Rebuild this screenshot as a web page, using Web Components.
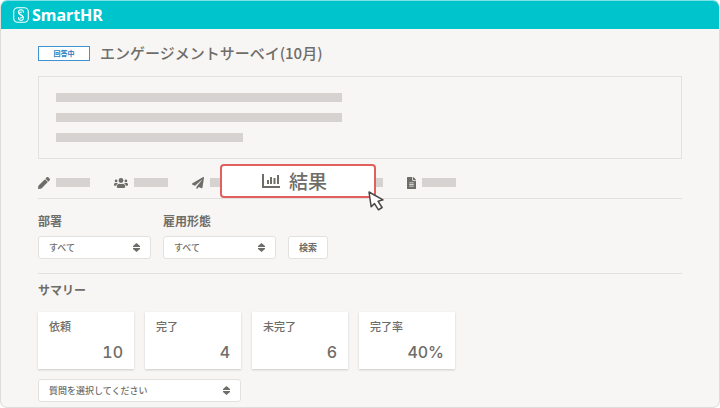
<!DOCTYPE html>
<html lang="ja">
<head>
<meta charset="utf-8">
<meta name="viewport" content="width=device-width, initial-scale=1">
<title>エンゲージメントサーベイ</title>
<style>
    * { box-sizing: border-box; }
    body {
        --text: #6f6d68;
        --line: #e2e1df;
        --bar: #d5d2d0;
        --brand: #00c4cc;
        margin: 0;
        background: #fff;
        color: var(--text);
        font-family: "Noto Sans CJK JP", sans-serif;
        font-weight: 500;
    }
    .title-row { display: flex; align-items: center; gap: 10px; height: 20px; }
    h1 { margin: 0; font-size: 15px; line-height: 20px; font-weight: 500; }
    h2 { margin: 7px 0 13px; font-size: 12px; line-height: 18px; font-weight: 700; }
    .filters {
        display: flex;
        align-items: flex-end;
        gap: 12px;
        margin-top: 13px;
        padding-bottom: 14px;
        border-bottom: 1px solid var(--line);
    }
    .filters select-box { width: 113px; }
    .cards { display: flex; flex-wrap: wrap; gap: 11px; margin-bottom: 10px; }
    .question { width: 203px; }
</style>
</head>
<body>
<app-window>
    <app-header slot="header">SmartHR</app-header>
    <div class="title-row">
        <status-badge>回答中</status-badge>
        <h1>エンゲージメントサーベイ(10月)</h1>
    </div>
    <text-panel></text-panel>
    <tab-bar>
        <tab-item icon="pencil" label="編集"></tab-item>
        <tab-item icon="users" label="対象者"></tab-item>
        <tab-item icon="plane" label="送信"></tab-item>
        <tab-item icon="chart" label="集計" wide>
            <tab-callout>結果</tab-callout>
        </tab-item>
        <tab-item icon="file" label="書類"></tab-item>
    </tab-bar>
    <div class="filters">
        <select-box label="部署" options="すべて"></select-box>
        <select-box label="雇用形態" options="すべて"></select-box>
        <search-button>検索</search-button>
    </div>
    <h2>サマリー</h2>
    <div class="cards">
        <summary-card value="10">依頼</summary-card>
        <summary-card value="4">完了</summary-card>
        <summary-card value="6">未完了</summary-card>
        <summary-card value="40%">完了率</summary-card>
    </div>
    <select-box class="question" options="質問を選択してください"></select-box>
</app-window>

<script>
const ICONS = {
    pencil: `<svg width="12" height="12" viewBox="0 0 512 512"><path d="M498 142l-46 46c-5 5-12 5-17 0L324 77c-5-5-5-12 0-17l46-46c19-19 49-19 68 0l60 60c19 19 19 49 0 68zM300 92L22 362 0 484c-3 16 12 30 28 28l122-22 270-278z"/></svg>`,
    users: `<svg width="14" height="12" viewBox="0 0 640 512"><path d="M96 224a64 64 0 1 0 0-128 64 64 0 0 0 0 128zm448 0a64 64 0 1 0 0-128 64 64 0 0 0 0 128zm32 32h-64c-18 0-34 7-45 18 40 22 69 62 75 110h66c18 0 32-14 32-32v-32c0-35-29-64-64-64zm-256 0a112 112 0 1 0 0-224 112 112 0 0 0 0 224zm77 32h-8c-43 21-94 21-138 0h-8c-64 0-115 52-115 115v29c0 27 21 48 48 48h288c27 0 48-21 48-48v-29c0-63-51-115-115-115zm-224-14c-11-11-27-18-45-18H64c-35 0-64 29-64 64v32c0 18 14 32 32 32h66c6-48 35-88 75-110z"/></svg>`,
    plane: `<svg width="12" height="12" viewBox="0 0 512 512"><path d="M476 3L21 266c-28 16-25 55 3 67l105 44L411 127c5-5 13 2 8 8L192 420v75c0 17 21 25 33 11l62-76 123 52c14 6 30-3 33-18L512 28c3-20-18-35-36-25z"/></svg>`,
    file: `<svg width="9" height="12" viewBox="0 0 384 512"><path d="M224 136V0H24C11 0 0 11 0 24v464c0 13 11 24 24 24h336c13 0 24-11 24-24V160H248c-13 0-24-11-24-24zm64 264H96v-32h192zm0-66H96v-32h192zm0-66H96v-32h192zM384 122v6H256V0h6c6 0 12 3 17 7l98 98c4 5 7 11 7 17z"/></svg>`,
    chart: `<svg width="18" height="14" viewBox="0 0 18 14" fill="none" stroke="currentColor" stroke-width="2"><path d="M1 0v13h17M6 10V6M9 10V3M12.500 10V4M16 10V1"/></svg>`
};

// Attaches an open shadow root with the given styles and markup
function render(el, css, html) {
    const template = document.createElement('template');
    template.innerHTML = `<style>* { box-sizing: border-box; } ${css}</style>${html}`;
    const shadow = el.attachShadow({ mode: 'open' });
    shadow.append(template.content.cloneNode(true));
    return shadow;
}

class AppWindow extends HTMLElement {
    connectedCallback() {
        render(this, `
            :host {
                display: flex;
                flex-direction: column;
                box-sizing: border-box;
                min-height: 100vh;
                border: 1px solid #dedddc;
                border-top-color: #7fe0e5;
                border-radius: 7px;
                background: #f7f6f5;
                overflow: hidden;
            }
            main { padding: 14px 37px 4px; }
        `, `<slot name="header"></slot><main><slot></slot></main>`);
    }
}

class AppHeader extends HTMLElement {
    connectedCallback() {
        render(this, `
            :host { display: block; }
            header {
                display: flex;
                align-items: center;
                gap: 3px;
                height: 28px;
                padding-left: 12px;
                background: var(--brand);
                color: #fff;
                font: 700 16px/28px "Noto Sans", sans-serif;
            }
        `, `
            <header>
                <svg width="16" height="16" viewBox="0 0 16 16" fill="none" stroke="#fff" stroke-width="1.100" aria-hidden="true">
                    <rect x="0.700" y="0.700" width="14.600" height="14.600" rx="4"/>
                    <path d="M10.500 5.700V5.200a2.500 2.500 0 0 0-5 0c0 1.300.8 1.900 1.800 2.400l1.700.9c.5.300.6.600.6 1.100a1.600 1.600 0 0 1-2.600 1"/>
                    <path d="M5.500 10.300v.5a2.500 2.500 0 0 0 5 0c0-1.300-.8-1.900-1.800-2.400L7 7.500c-.5-.3-.6-.6-.6-1.100a1.600 1.600 0 0 1 2.600-1"/>
                </svg>
                <span><slot></slot></span>
            </header>
        `);
    }
}

class StatusBadge extends HTMLElement {
    connectedCallback() {
        render(this, `
            :host {
                display: block;
                box-sizing: border-box;
                width: 52px;
                border: 1px solid #3f94d0;
                background: #fff;
                color: #1f80c4;
                font-size: 7px;
                font-weight: 700;
                line-height: 13px;
                text-align: center;
            }
        `, `<slot></slot>`);
    }
}

class TextPanel extends HTMLElement {
    connectedCallback() {
        render(this, `
            :host {
                display: flex;
                flex-direction: column;
                gap: 11px;
                box-sizing: border-box;
                margin-top: 13px;
                padding: 16px 17px;
                border: 1px solid var(--line);
            }
            i { width: 286px; height: 9px; background: var(--bar); }
            i:last-child { width: 187px; }
        `, `<i></i><i></i><i></i>`);
    }
}

class TabBar extends HTMLElement {
    connectedCallback() {
        render(this, `
            :host { display: block; margin-top: 8px; border-bottom: 1px solid var(--line); }
            nav { display: flex; gap: 24px; height: 31px; }
        `, `<nav><slot></slot></nav>`);
    }
}

class TabItem extends HTMLElement {
    connectedCallback() {
        const label = this.getAttribute('label');
        render(this, `
            :host { display: flex; position: relative; }
            a { display: flex; align-items: center; gap: 6px; color: var(--text); }
            svg { fill: currentColor; }
            i { width: 34px; height: 9px; background: var(--bar); }
            :host([wide]) i { width: 91px; }
        `, `<a href="#" aria-label="${label}">${ICONS[this.getAttribute('icon')]}<i></i></a><slot></slot>`);
    }
}

// Enlarged tab with a pointer, shown over the tab bar
class TabCallout extends HTMLElement {
    connectedCallback() {
        render(this, `
            :host { position: absolute; top: -3px; left: -48px; z-index: 1; }
            button {
                display: flex;
                align-items: center;
                justify-content: center;
                gap: 9px;
                width: 156px;
                height: 34px;
                padding: 0 7px 0 0;
                border: 2px solid #e0605e;
                border-radius: 4px;
                background: #fff;
                color: var(--text);
                font: inherit;
                font-size: 19px;
                line-height: 30px;
            }
            .pointer { position: absolute; right: -9px; bottom: -13px; }
        `, `
            <button type="button">${ICONS.chart}<span><slot></slot></span></button>
            <svg class="pointer" width="17" height="20" viewBox="0 0 17 20" fill="#fff" stroke="#4a4745" stroke-width="1.500" stroke-linejoin="round" aria-hidden="true">
                <path d="M1 1l2.200 14.800 3.300-3.200 4 6.200 3.600-2.300-4-6.200 4.900-1.400z"/>
            </svg>
        `);
    }
}

class SelectBox extends HTMLElement {
    connectedCallback() {
        const label = this.getAttribute('label');
        const options = this.getAttribute('options').split(',');
        render(this, `
            :host { display: block; }
            label { display: block; margin-bottom: 6px; font-size: 12px; font-weight: 700; line-height: 18px; }
            .field { display: grid; align-items: center; }
            select, svg { grid-area: 1 / 1; }
            select {
                appearance: none;
                width: 100%;
                height: 23px;
                padding: 0 20px 0 10px;
                border: 1px solid var(--line);
                border-radius: 3px;
                background: #fff;
                color: var(--text);
                font: inherit;
                font-size: 9px;
            }
            svg { justify-self: end; margin-right: 11px; fill: var(--text); pointer-events: none; }
        `, `
            ${label ? `<label for="field">${label}</label>` : ''}
            <div class="field">
                <select id="field" ${label ? '' : `aria-label="${options[0]}"`}>
                    ${options.map(text => `<option>${text}</option>`).join('')}
                </select>
                <svg width="7" height="9" viewBox="0 0 7 9" aria-hidden="true"><path d="M3.500 0L7 3v1H0V3zM0 5h7v1L3.500 9 0 6z"/></svg>
            </div>
        `);
    }
}

class SearchButton extends HTMLElement {
    connectedCallback() {
        render(this, `
            :host { display: block; }
            button {
                display: block;
                width: 40px;
                height: 23px;
                padding: 0;
                border: 1px solid var(--line);
                border-radius: 3px;
                background: #fff;
                color: var(--text);
                font: inherit;
                font-size: 9px;
                font-weight: 700;
            }
        `, `<button type="button"><slot></slot></button>`);
    }
}

class SummaryCard extends HTMLElement {
    connectedCallback() {
        render(this, `
            :host {
                display: flex;
                flex-direction: column;
                justify-content: space-between;
                box-sizing: border-box;
                width: 96px;
                height: 57px;
                padding: 6px 11px;
                background: #fff;
                box-shadow: 0 1px 2px #0000002e;
            }
            .name { font-size: 11px; line-height: 16px; }
            .value { font: 500 16px/22px Inter, sans-serif; font-variant-numeric: tabular-nums; text-align: right; }
        `, `<div class="name"><slot></slot></div><div class="value">${this.getAttribute('value')}</div>`);
    }
}

customElements.define('app-window', AppWindow);
customElements.define('app-header', AppHeader);
customElements.define('status-badge', StatusBadge);
customElements.define('text-panel', TextPanel);
customElements.define('tab-bar', TabBar);
customElements.define('tab-item', TabItem);
customElements.define('tab-callout', TabCallout);
customElements.define('select-box', SelectBox);
customElements.define('search-button', SearchButton);
customElements.define('summary-card', SummaryCard);
</script>
</body>
</html>
